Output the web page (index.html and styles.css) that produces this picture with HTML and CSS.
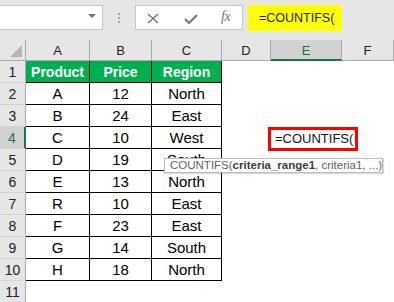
FILE: index.html
```html
<!DOCTYPE html>
<html>
<head>
<meta charset="utf-8">
<link rel="stylesheet" href="styles.css">
</head>
<body>
<div class="app">
  <div class="toolbar">
    <div class="namebox"><span class="dd"></span></div>
    <div class="dots"><i></i><i></i><i></i></div>
    <div class="fbuttons">
      <svg class="ico-x" width="12" height="11" viewBox="0 0 12 11"><path d="M1 1 L11 10 M11 1 L1 10" stroke="#7a7a7a" stroke-width="1.6" fill="none"/></svg>
      <svg class="ico-ok" width="14" height="10" viewBox="0 0 14 10"><path d="M1 5 L5 9 L13 1" stroke="#7a7a7a" stroke-width="2.2" fill="none"/></svg>
      <span class="fx">fx</span>
    </div>
    <div class="formula">=COUNTIFS(</div>
  </div>
  <div class="sheet">
    <div class="corner"><span class="tri"></span></div>
    <div class="ch">A</div><div class="ch">B</div><div class="ch">C</div><div class="ch">D</div><div class="ch ch-active">E</div><div class="ch">F</div>

    <div class="rh">1</div><div class="c hd">Product</div><div class="c hd">Price</div><div class="c hd">Region</div><div class="e"></div><div class="e"></div><div class="e"></div>
    <div class="rh">2</div><div class="c">A</div><div class="c">12</div><div class="c">North</div><div class="e"></div><div class="e"></div><div class="e"></div>
    <div class="rh">3</div><div class="c">B</div><div class="c">24</div><div class="c">East</div><div class="e"></div><div class="e"></div><div class="e"></div>
    <div class="rh rh-active">4</div><div class="c">C</div><div class="c">10</div><div class="c">West</div><div class="e"></div><div class="e active"><div class="edit">=COUNTIFS(</div></div><div class="e"></div>
    <div class="rh">5</div><div class="c">D</div><div class="c">19</div><div class="c">South</div><div class="e"></div><div class="e"></div><div class="e"></div>
    <div class="rh">6</div><div class="c">E</div><div class="c">13</div><div class="c">North</div><div class="e"></div><div class="e"></div><div class="e"></div>
    <div class="rh">7</div><div class="c">R</div><div class="c">10</div><div class="c">East</div><div class="e"></div><div class="e"></div><div class="e"></div>
    <div class="rh">8</div><div class="c">F</div><div class="c">23</div><div class="c">East</div><div class="e"></div><div class="e"></div><div class="e"></div>
    <div class="rh">9</div><div class="c">G</div><div class="c">14</div><div class="c">South</div><div class="e"></div><div class="e"></div><div class="e"></div>
    <div class="rh">10</div><div class="c">H</div><div class="c">18</div><div class="c">North</div><div class="e"></div><div class="e"></div><div class="e"></div>
    <div class="rh">11</div><div class="e"></div><div class="e"></div><div class="e"></div><div class="e"></div><div class="e"></div><div class="e"></div>

    <div class="tip">COUNTIFS(<b>criteria_range1</b>, criteria1, ...)</div>
  </div>
</div>
</body>
</html>
```
FILE: styles.css
```css
* { box-sizing: border-box; }
html, body { margin: 0; padding: 0; }
body {
  width: 394px; height: 302px; overflow: hidden;
  font-family: "Liberation Sans", Arial, sans-serif;
  background: #ffffff;
}
.app { width: 394px; height: 302px; overflow: hidden; }

.toolbar {
  height: 40px;
  background: #e6e6e6;
  display: flex;
  align-items: flex-start;
  padding-top: 5px;
}
.namebox {
  width: 103px; height: 25px;
  background: #fff;
  border: 1px solid #c6c6c6;
  border-left: none;
  position: relative;
  display: flex; align-items: center; justify-content: flex-end;
  padding-right: 6px;
}
.dd {
  width: 0; height: 0;
  border-left: 4px solid transparent;
  border-right: 4px solid transparent;
  border-top: 4px solid #777;
  margin-top: -3px;
}
.dots {
  width: 32px; height: 25px;
  display: flex; flex-direction: column; align-items: center; justify-content: center;
  gap: 2px;
}
.dots i { display: block; width: 2px; height: 2px; background: #a8a8a8; }
.fbuttons {
  width: 108px; height: 25px;
  background: #fff;
  border: 1px solid #c6c6c6;
  display: flex; align-items: center;
  padding-left: 11px;
}
.ico-x { margin-top: 1px; }
.ico-ok { margin-left: 25px; margin-top: 2px; }
.fx {
  margin-left: 23px;
  font-family: "Liberation Serif", "Times New Roman", serif;
  font-style: italic;
  font-size: 14px;
  color: #6f6f6f;
  letter-spacing: -0.5px;
  margin-top: -2px;
}
.formula {
  margin-left: 5px;
  width: 94px; height: 26px;
  background: #ffff00;
  font-size: 12.5px;
  color: #1a1a1a;
  padding-left: 11px;
  line-height: 26px;
}

.sheet {
  position: relative;
  display: grid;
  grid-template-columns: 26px 64px 62px 70px 49px 71px 52px;
  grid-template-rows: 21px repeat(11, 22px);
}
.corner {
  background: #e6e6e6;
  border-right: 1px solid #ababab;
  border-bottom: 1px solid #ababab;
  position: relative;
}
.tri {
  position: absolute; right: 3px; bottom: 3px;
  width: 0; height: 0;
  border-left: 12px solid transparent;
  border-bottom: 12px solid #b6b6b6;
}
.ch {
  background: #e6e6e6;
  border-right: 1px solid #ababab;
  border-bottom: 1px solid #ababab;
  font-size: 13px;
  color: #222;
  display: flex; align-items: center; justify-content: center;
  padding-top: 1px;
}
.ch-active {
  background: #d2d2d2;
  color: #217346;
  border-bottom: 2px solid #217346;
}
.rh {
  background: #e6e6e6;
  border-right: 1px solid #ababab;
  border-bottom: 1px solid #d4d4d4;
  font-size: 14px;
  color: #222;
  display: flex; align-items: center; justify-content: center;
}
.rh-active {
  background: #d2d2d2;
  color: #217346;
  border-right: 2px solid #217346;
}
.c {
  border-right: 1px solid #000;
  border-bottom: 1px solid #000;
  font-size: 15px;
  color: #000;
  display: flex; align-items: center; justify-content: center;
}
.c.hd {
  background: #00b050;
  color: #fff;
  font-weight: bold;
  font-size: 14px;
}
.e { background: #fff; }
.active { position: relative; }
.edit {
  position: absolute;
  left: -3px; top: 0;
  width: 90px; height: 24px;
  border: 3px solid #ff0000;
  background: #fff;
  font-size: 13px;
  color: #111;
  padding-left: 4px;
  line-height: 18px;
  white-space: nowrap;
  z-index: 2;
}
.tip {
  position: absolute;
  left: 164px; top: 118px;
  width: 219px; height: 15px;
  background: #fff;
  border: 1px solid #bdbdbd;
  box-shadow: 1px 1px 1px rgba(0,0,0,0.15);
  font-size: 11.5px;
  line-height: 13px;
  color: #5f5f5f;
  padding-left: 5px;
  white-space: nowrap;
  z-index: 3;
}
.tip b { color: #3c3c3c; }
```
